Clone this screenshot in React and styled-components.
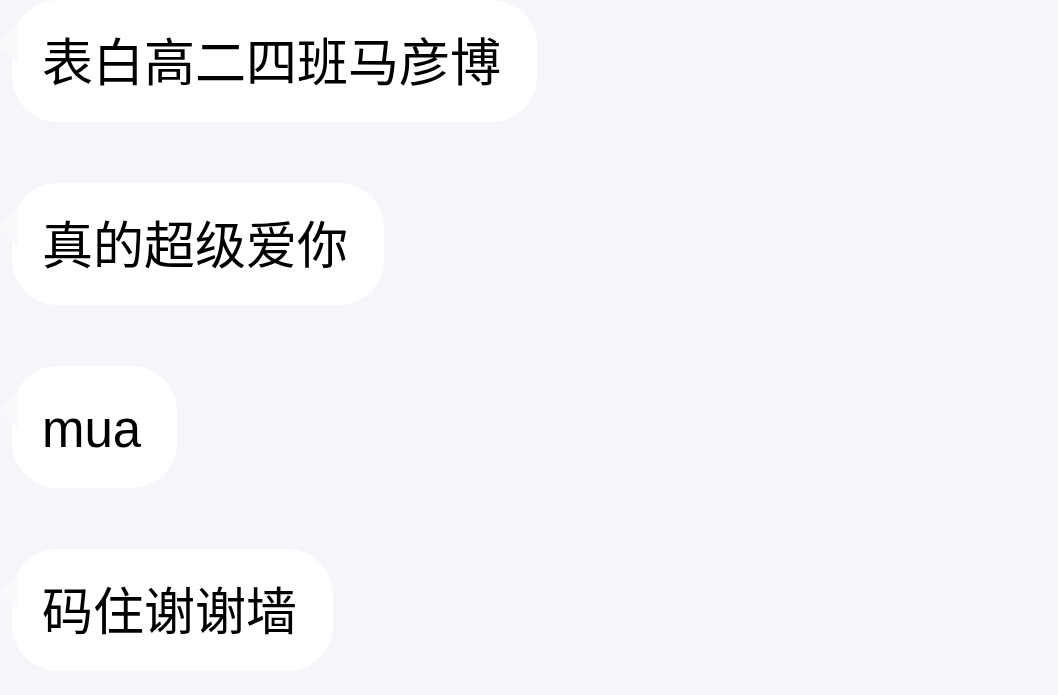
import React from 'react'
import styled, { createGlobalStyle } from 'styled-components'

const GlobalStyle = createGlobalStyle`
  html, body {
    margin: 0;
    padding: 0;
    background: #f5f6fa;
  }
  body {
    font-family: "Liberation Sans", "Noto Sans CJK SC", sans-serif;
  }
`

const messages = ['表白高二四班马彦博', '真的超级爱你', 'mua', '码住谢谢墙']

const App = () => {
  return (
    <>
      <GlobalStyle />
      <Wrapper>
        {messages.map((text, i) => (
          <Row key={i}>
            <Bubble>{text}</Bubble>
          </Row>
        ))}
      </Wrapper>
    </>
  )
}

const Wrapper = styled.div`
  width: 1058px;
  height: 695px;
  overflow: hidden;
  display: flex;
  flex-direction: column;
  gap: 61px;
  padding: 0 0 0 12px;
  box-sizing: border-box;
  background: #f5f6fa;
`

const Row = styled.div`
  display: flex;
  align-items: flex-start;
`

const Bubble = styled.div`
  position: relative;
  height: 122px;
  display: flex;
  align-items: center;
  padding: 4px 36px 0 30px;
  box-sizing: border-box;
  background: #ffffff;
  border-radius: 46px;
  color: #000;
  font-size: 51px;
  font-weight: 400;
  line-height: 1;
  white-space: nowrap;

  &::before {
    content: '';
    position: absolute;
    left: -12px;
    top: 24px;
    width: 18px;
    height: 38px;
    background: #f9f9fc;
    clip-path: polygon(0 45%, 100% 0, 100% 100%, 0 60%);
  }
`

export default App
